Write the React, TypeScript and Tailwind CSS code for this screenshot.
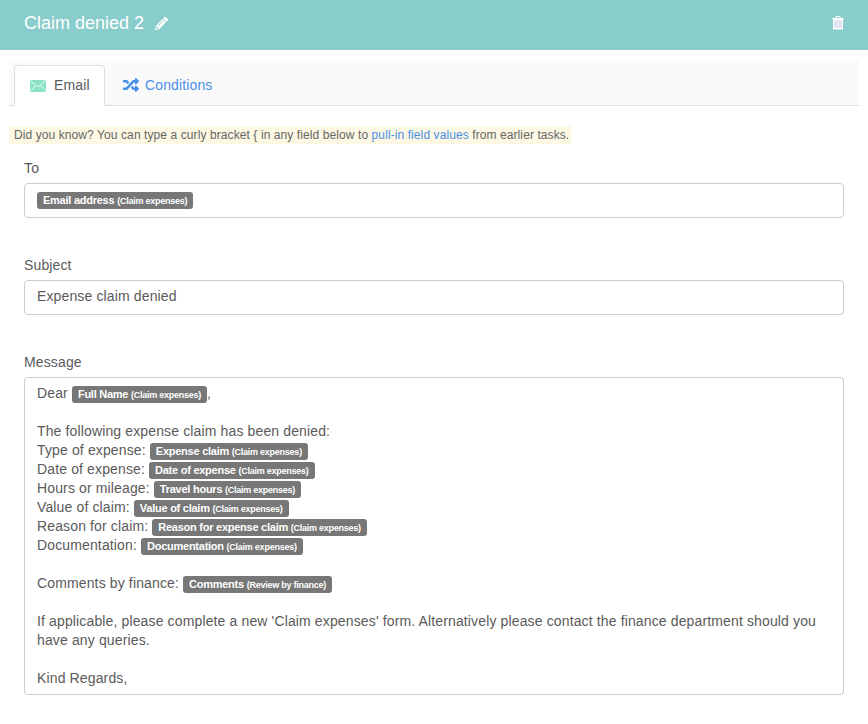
import { FaRandom, FaPencilAlt } from "react-icons/fa";

// Merge field pill, e.g. "Full Name (Claim expenses)"
function Tag({ name, from }: { name: string; from: string }) {
  return (
    <span className="inline-block h-[17px] px-[6px] bg-[#777] rounded-[3px] text-white text-[11px] font-bold tracking-[-0.25px] leading-[16px] align-[0px] whitespace-nowrap">
      {name} <span className="text-[9px]">({from})</span>
    </span>
  );
}

function Line({ label, name, from = "Claim expenses", tail }: { label: string; name: string; from?: string; tail?: string }) {
  return (
    <div className="h-[19px]">
      {label} <Tag name={name} from={from} />
      {tail}
    </div>
  );
}

function MailIcon() {
  return (
    <svg width="16" height="12" viewBox="0 0 16 12" className="shrink-0">
      <rect width="16" height="12" fill="#8be3c3" />
      <path d="M0 0.5 L8 7 L16 0.5 M0 11.5 L5.5 5.5 M16 11.5 L10.5 5.5" stroke="#fff" strokeWidth="0.8" fill="none" />
    </svg>
  );
}

function TrashIcon() {
  return (
    <svg width="12" height="14" viewBox="0 0 12 14">
      <path d="M4 2V0.5H8V2" stroke="#fff" strokeWidth="1" fill="none" />
      <rect x="0" y="2" width="12" height="1" fill="#fff" />
      <path d="M1 3H11V13.5H1Z" fill="#fff" />
      <path d="M3 4.5V12M5 4.5V12M7 4.5V12M9 4.5V12" stroke="#c9cbe8" strokeWidth="1" />
    </svg>
  );
}

export default function App() {
  return (
    <div className="min-h-screen bg-white font-['Liberation_Sans',Arial,sans-serif] text-[14px] tracking-[0.135px] leading-[19px] text-[#5a5a5a] overflow-hidden">
      {/* Header */}
      <header className="h-[50px] bg-[#88cccb] flex items-center justify-between pl-[24px] pr-[24px] pb-[4px] text-white">
        <div className="flex items-center gap-[11px]">
          <h1 className="text-[18px] tracking-normal">Claim denied 2</h1>
          <FaPencilAlt size={13} />
        </div>
        <TrashIcon />
      </header>

      {/* Tabs */}
      <div className="mt-[10px] mx-[9px] h-[46px] bg-[#fafafa] border-b border-[#ddd] flex items-end pl-[5px]">
        <div className="h-[41px] w-[91px] -mb-[1px] bg-white border border-[#ddd] border-b-white rounded-t-[4px] flex items-center gap-[8px] pl-[15px]">
          <MailIcon />
          <span>Email</span>
        </div>
        <div className="h-[41px] flex items-center gap-[6px] pl-[18px] pt-[1px] text-[#4a8fe7]">
          <FaRandom size={16} />
          <span>Conditions</span>
        </div>
      </div>

      {/* Hint */}
      <div className="mt-[20px] ml-[9px] w-fit h-[18px] bg-[#fcf8e3] pl-[5px] pr-[2px] text-[12px] tracking-[0.09px] leading-[18px] text-[#666]">
        Did you know? You can type a curly bracket {"{"} in any field below to{" "}
        <span className="text-[#4a8fe7]">pull-in field values</span> from earlier tasks.
      </div>

      <div className="mx-[24px]">
        {/* To */}
        <label className="block mt-[15px] mb-[5px]">To</label>
        <div className="h-[35px] border border-[#ccc] rounded-[4px] pl-[12px] pt-[6px] leading-[19px]">
          <Tag name="Email address" from="Claim expenses" />
        </div>

        {/* Subject */}
        <label className="block mt-[38px] mb-[5px]">Subject</label>
        <div className="h-[35px] border border-[#ccc] rounded-[4px] pl-[12px] pt-[6px]">Expense claim denied</div>

        {/* Message */}
        <label className="block mt-[38px] mb-[5px]">Message</label>
        <div className="h-[318px] border border-[#ccc] rounded-[4px] pl-[12px] pr-[20px] pt-[6px]">
          <Line label="Dear" name="Full Name" tail="," />
          <div className="h-[19px]" />
          <div className="h-[19px]">The following expense claim has been denied:</div>
          <Line label="Type of expense:" name="Expense claim" />
          <Line label="Date of expense:" name="Date of expense" />
          <Line label="Hours or mileage:" name="Travel hours" />
          <Line label="Value of claim:" name="Value of claim" />
          <Line label="Reason for claim:" name="Reason for expense claim" />
          <Line label="Documentation:" name="Documentation" />
          <div className="h-[19px]" />
          <Line label="Comments by finance:" name="Comments" from="Review by finance" />
          <div className="h-[19px]" />
          <div>If applicable, please complete a new 'Claim expenses' form. Alternatively please contact the finance department should you have any queries.</div>
          <div className="h-[19px]" />
          <div>Kind Regards,</div>
        </div>
      </div>
    </div>
  );
}
